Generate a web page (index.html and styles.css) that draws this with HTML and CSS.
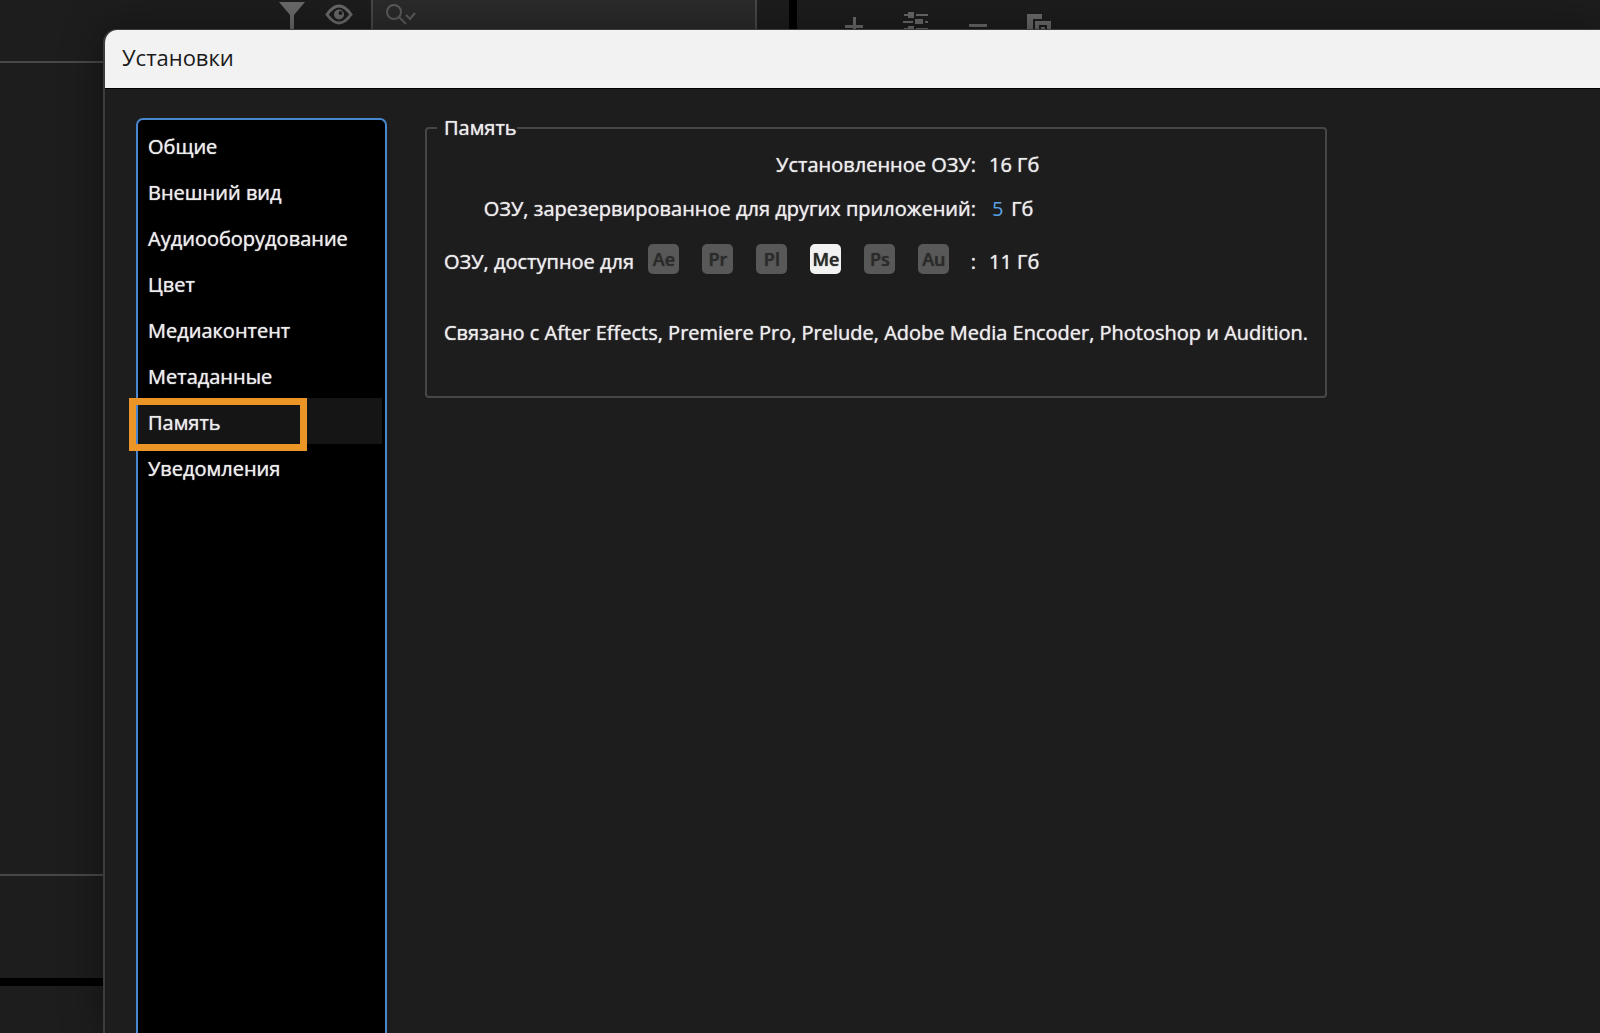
FILE: index.html
```
<!DOCTYPE html>
<html lang="ru">
<head>
	<title>Установки</title>
	<meta charset="utf-8">
	<link rel="stylesheet" href="styles.css">
</head>
<body>
	<div class="app">
		<section class="panel panel-left">
			<div class="toolbar">
				<button class="tool" type="button" aria-label="Фильтр">
					<svg width="26" height="36" viewBox="0 0 26 36"><path d="M0 2h26L15 15v16l-4 3V15z"/></svg>
				</button>
				<button class="tool" type="button" aria-label="Просмотр">
					<svg width="28" height="36" viewBox="0 0 28 36">
						<path class="line" d="M3 14.500Q9 6 15 6T27 14.500Q21 23 15 23T3 14.500z"/>
						<circle cx="15" cy="14.500" r="5"/>
						<circle class="hole" cx="16.500" cy="13" r="2"/>
					</svg>
				</button>
				<label class="search">
					<svg width="34" height="30" viewBox="0 0 34 30">
						<circle class="line" cx="10" cy="12" r="7"/>
						<path class="line" d="M15 17l7 7M22 15l4 4 5-6"/>
					</svg>
					<input type="text" aria-label="Поиск">
				</label>
			</div>
			<div class="tree"></div>
			<div class="status"></div>
			<div class="bottom"></div>
		</section>
		<section class="panel panel-right">
			<div class="actions">
				<button class="tool" type="button" aria-label="Добавить">
					<svg width="18" height="18" viewBox="0 0 18 18"><path d="M8 0h3v8h7v3h-7v7H8v-7H0V8h8z"/></svg>
				</button>
				<button class="tool" type="button" aria-label="Параметры">
					<svg width="26" height="24" viewBox="0 0 26 24">
						<path d="M1 0h4v-2h6v6H5V2H1zM13 0h12v2H13zM0 7h10v2H0zM12 5h8v5h-8zM22 7h3v2h-3zM1 14h4v-2h6v5H5v-1H1zM13 14h12v2H13z"/>
					</svg>
				</button>
				<button class="tool" type="button" aria-label="Удалить">
					<svg width="18" height="18" viewBox="0 0 18 18"><path d="M0 7h18v3H0z"/></svg>
				</button>
				<button class="tool" type="button" aria-label="Дублировать">
					<svg width="26" height="24" viewBox="0 0 26 24">
						<path d="M0 0h15v5H6v13H0z"/>
						<path d="M8 7h16v17H8zM12 11v9h8v-9z" fill-rule="evenodd"/>
						<path d="M14 13h4v4h-4z"/>
					</svg>
				</button>
			</div>
		</section>

		<div class="dialog" role="dialog" aria-labelledby="dialog_title">
			<h1 class="titlebar" id="dialog_title">Установки</h1>
			<div class="content">
				<nav class="menu">
					<button class="item" type="button">Общие</button>
					<button class="item" type="button">Внешний вид</button>
					<button class="item" type="button">Аудиооборудование</button>
					<button class="item" type="button">Цвет</button>
					<button class="item" type="button">Медиаконтент</button>
					<button class="item" type="button">Метаданные</button>
					<button class="item selected" type="button">Память<span class="marker"></span></button>
					<button class="item" type="button">Уведомления</button>
				</nav>
				<fieldset class="memory">
					<legend>Память</legend>
					<div class="rows">
						<span class="name">Установленное ОЗУ:</span>
						<span>16 Гб</span>
						<label class="name" for="reserved">ОЗУ, зарезервированное для других приложений:</label>
						<span class="edit"><input type="text" id="reserved" value="5"> Гб</span>
						<span class="apps">
							<span>ОЗУ, доступное для</span>
							<span class="badges">
								<b>Ae</b>
								<b>Pr</b>
								<b>Pl</b>
								<b class="on">Me</b>
								<b>Ps</b>
								<b>Au</b>
							</span>
							<span class="colon">:</span>
						</span>
						<span class="free">11 Гб</span>
					</div>
					<p class="note">Связано с After Effects, Premiere Pro, Prelude, Adobe Media Encoder, Photoshop и Audition.</p>
				</fieldset>
			</div>
		</div>
	</div>
</body>
</html>
```
FILE: styles.css
```
*, *:before, *:after {
	box-sizing: border-box;
}

body {
	margin: 0;
	background: #1d1d1d;
	color: #ececec;
	font-family: "Open Sans", "Noto Sans", sans-serif;
	font-size: 20px;
	font-weight: 500;
	line-height: 28px;
}

button, input {
	font: inherit;
	color: inherit;
	background: none;
	border: none;
	padding: 0;
	margin: 0;
}

.app {
	position: relative;
	display: flex;
	height: 100vh;
	overflow: hidden;
}

/* panels behind the dialog */
.panel {
	display: flex;
	flex-direction: column;
}

.panel-left {
	width: 797px;
	border-right: 8px solid #000;
}

.panel-right {
	flex: 1;
}

.toolbar {
	display: flex;
	justify-content: flex-end;
	gap: 19px;
	height: 63px;
	padding-right: 32px;
	border-bottom: 2px solid #484848;
}

.tree {
	flex: 1;
	border-bottom: 2px solid #484848;
}

.status {
	height: 110px;
	border-bottom: 8px solid #000;
}

.bottom {
	height: 47px;
}

.tool {
	display: flex;
	align-items: flex-start;
}

svg {
	display: block;
	fill: #6a6a6a;
	overflow: visible;
}

svg .line {
	fill: none;
	stroke: #6a6a6a;
	stroke-width: 3;
}

svg .hole {
	fill: #1d1d1d;
}

.search {
	display: flex;
	width: 386px;
	height: 36px;
	padding-left: 11px;
	background: #2b2b2b;
	border: 2px solid #484848;
	border-top: none;
}

.search .line {
	stroke: #5c5c5c;
	stroke-width: 2;
}

.search input {
	flex: 1;
	min-width: 0;
}

.actions {
	display: flex;
	gap: 40px;
	padding: 14px 0 0 48px;
}

.actions .tool:nth-child(odd) {
	padding-top: 3px;
}

/* dialog */
.dialog {
	position: absolute;
	inset: 29px 0 0 103px;
	display: flex;
	flex-direction: column;
	background: #1d1d1d;
	border: 2px solid #3c3c3c;
	border-width: 1px 0 0 2px;
	border-radius: 14px 0 0 0;
	box-shadow: 0 0 40px rgba(0,0,0,0.4);
	overflow: hidden;
}

.titlebar {
	margin: 0;
	padding: 12px 17px 16px;
	background: #f2f2f2;
	border-bottom: 1px solid #000;
	color: #1a1a1a;
	font-size: 22px;
	font-weight: 400;
	line-height: 30px;
}

.content {
	flex: 1;
	display: flex;
	align-items: flex-start;
	gap: 38px;
	padding: 29px 30px 0 31px;
	text-shadow: 0 0 1px currentColor;
}

.menu {
	align-self: stretch;
	display: flex;
	flex-direction: column;
	width: 251px;
	padding: 2px 3px 0 0;
	background: #000;
	border: 2px solid #4788d0;
	border-bottom: none;
	border-radius: 7px 7px 0 0;
}

.item {
	position: relative;
	height: 46px;
	padding: 4px 0 0 10px;
	text-align: left;
	text-shadow: inherit;
}

.selected {
	background: #151515;
}

.marker {
	position: absolute;
	top: 0;
	left: -9px;
	width: 178px;
	height: 53px;
	border: 7px solid #eb9526;
	z-index: 1;
}

.memory {
	margin: 0;
	padding: 13px 17px 49px 17px;
	border: 2px solid #464646;
	border-radius: 4px;
}

.memory legend {
	margin-left: -7px;
	padding: 0 0 0 7px;
	line-height: 20px;
}

.rows {
	display: grid;
	grid-template-columns: 532px 1fr;
	column-gap: 13px;
	row-gap: 16px;
	align-items: center;
}

.name {
	text-align: right;
}

.edit input {
	width: 14px;
	margin-left: 3px;
	color: #5aa2e8;
}

.apps {
	display: flex;
	align-items: center;
	justify-content: space-between;
}

.apps, .free {
	padding-top: 5px;
}

.badges {
	display: flex;
	gap: 23px;
	padding-bottom: 5px;
}

.colon {
	margin-left: 7px;
}

.badges b {
	width: 31px;
	height: 30px;
	background: #585858;
	border-radius: 5px;
	color: #2b2b2b;
	font-size: 18px;
	font-weight: 600;
	line-height: 30px;
	text-align: center;
}

.badges .on {
	background: #f2f2f2;
}

.note {
	margin: 40px 0 0;
}
```
